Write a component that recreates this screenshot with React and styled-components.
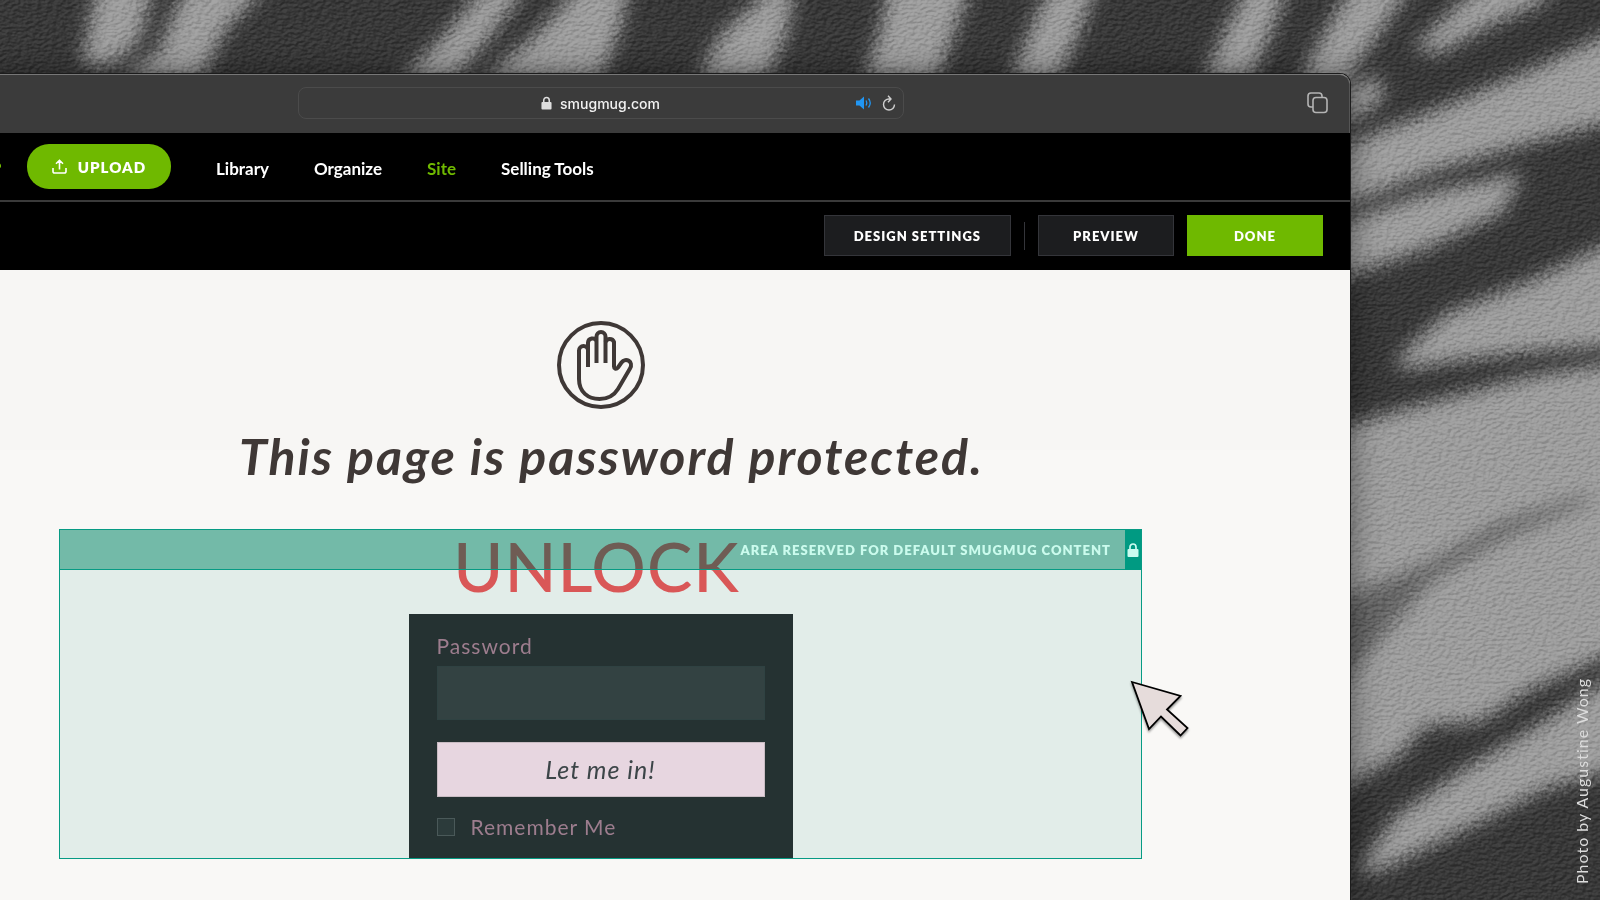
import React, { Component } from "react";
import styled, { createGlobalStyle } from "styled-components";

const GlobalStyle = createGlobalStyle`
  * { box-sizing: border-box; }
  body { margin: 0; background: #383838; font-family: Lato, "Liberation Sans", sans-serif; }
  button, input { font-family: inherit; }
`;

const Desktop = styled.div`
  position: relative;
  display: flex;
  min-height: 100vh;
  overflow: hidden;
`;

const Wallpaper = styled.svg`
  position: absolute;
  top: 0;
  left: 0;
  width: 100%;
  height: 100%;
`;

const Credit = styled.div`
  position: absolute;
  right: 8px;
  bottom: 16px;
  writing-mode: vertical-rl;
  transform: rotate(180deg);
  color: #dcdcdc;
  font-size: 16px;
  line-height: 20px;
  letter-spacing: 1px;
`;

const BrowserWindow = styled.div`
  position: relative;
  flex: 1;
  display: flex;
  flex-direction: column;
  margin: 74px 250px 0 -148px;
  border-radius: 0 10px 0 0;
  background: #f8f7f5;
  box-shadow: 0 0 0 1px #1c1c1c, 2px 0 30px rgba(0, 0, 0, 0.45);
`;

const Chrome = styled.div`
  display: grid;
  grid-template-columns: 1fr 606px 1fr;
  align-items: center;
  height: 59px;
  padding: 0 20px 2px;
  background: #3b3b3b;
  border-top: 1px solid #777;
  border-right: 1px solid #555;
  border-radius: 0 10px 0 0;
`;

const AddressBar = styled.div`
  grid-column: 2;
  display: grid;
  grid-template-columns: 1fr auto 1fr;
  align-items: center;
  height: 32px;
  padding: 0 7px;
  border: 1px solid #4b4b4b;
  border-radius: 8px;
`;

const Address = styled.div`
  grid-column: 2;
  display: flex;
  align-items: center;
  gap: 8px;
  color: #f2f2f2;
  font: 500 14px Inter, "Liberation Sans", sans-serif;
`;

const BarTools = styled.div`
  display: flex;
  justify-content: flex-end;
  align-items: center;
  gap: 10px;
`;

const IconButton = styled.button`
  display: flex;
  justify-self: end;
  padding: 0;
  border: 0;
  background: none;
`;

const SiteNav = styled.nav`
  display: flex;
  align-items: center;
  gap: 45px;
  height: 69px;
  padding: 0 26px 0 100px;
  background: #000;
  border-bottom: 2px solid #3a3a3a;
`;

const Brand = styled.div`
  display: flex;
  align-items: center;
  gap: 26px;
`;

const UploadButton = styled.button`
  display: flex;
  align-items: center;
  justify-content: center;
  gap: 11px;
  width: 144px;
  height: 45px;
  border: 0;
  border-radius: 22px;
  background: #6fb900;
  color: #fff;
  font-size: 15px;
  font-weight: 800;
  letter-spacing: 1px;
`;

const NavLink = styled.a`
  padding-top: 4px;
  color: ${(props) => (props.$active ? "#6fb900" : "#fff")};
  font-size: 17px;
  font-weight: 700;
  line-height: 24px;
  text-decoration: none;
`;

const Toolbar = styled.div`
  display: flex;
  justify-content: flex-end;
  align-items: flex-start;
  gap: 13px;
  height: 68px;
  padding: 13px 27px 0;
  background: #000;
`;

const ToolButton = styled.button`
  min-width: 136px;
  height: 41px;
  padding: 0 29px;
  border: 1px solid ${(props) => (props.$primary ? "#6fb900" : "#34353a")};
  background: ${(props) => (props.$primary ? "#6fb900" : "#1c1d1f")};
  color: #fff;
  font-size: 13px;
  font-weight: 800;
  letter-spacing: 1px;
`;

const Divider = styled.div`
  width: 1px;
  height: 28px;
  margin-top: 7px;
  background: #34353a;
`;

const Content = styled.main`
  flex: 1;
  display: flex;
  flex-direction: column;
  align-items: center;
  padding: 51px 208px 40px 207px;
  background: linear-gradient(#f7f6f4 180px, #f9f8f6 180px);
`;

const PageTitle = styled.h1`
  margin: 18px 0 44px;
  padding-left: 22px;
  color: #3f3836;
  font-size: 50px;
  font-style: italic;
  font-weight: 700;
  line-height: 58px;
  letter-spacing: 2px;
  white-space: nowrap;
`;

const Reserved = styled.section`
  position: relative;
  display: flex;
  flex-direction: column;
  align-items: center;
  align-self: stretch;
  border: 1px solid #079b84;
  background: #e2ede9;
`;

const ReservedBar = styled.div`
  position: absolute;
  top: 0;
  left: 0;
  right: 0;
  display: flex;
  justify-content: flex-end;
  align-items: center;
  gap: 14px;
  height: 40px;
  background: rgba(115, 187, 168, 0.2);
  border-bottom: 1px solid #079b84;
  color: #cbfbed;
  font-size: 13px;
  font-weight: 800;
  letter-spacing: 1px;
`;

const Tint = styled.div`
  position: absolute;
  top: 0;
  left: 0;
  right: 0;
  height: 40px;
  background: #82c9b8;
  mix-blend-mode: multiply;
`;

const LockTab = styled.div`
  display: flex;
  align-items: center;
  justify-content: center;
  width: 16px;
  height: 40px;
  background: #009a82;
`;

const UnlockTitle = styled.h2`
  margin: 0 0 12px;
  padding-right: 8px;
  color: #d95757;
  font-size: 68px;
  font-weight: 500;
  line-height: 72px;
  letter-spacing: 1px;
`;

const Form = styled.form`
  display: flex;
  flex-direction: column;
  width: 384px;
  height: 244px;
  padding: 20px 28px 0;
  background: #253232;
  color: #9d7d8e;
  font-size: 21px;
  line-height: 24px;
`;

const FieldLabel = styled.label`
  letter-spacing: 1px;
`;

const PasswordInput = styled.input`
  height: 54px;
  margin: 8px 0 22px;
  padding: 0 14px;
  border: 1px solid #2f4242;
  border-radius: 0;
  background: #334242;
  color: #e6d5df;
  font-size: 21px;
`;

const SubmitButton = styled.button`
  height: 55px;
  padding: 0 6px 2px;
  border: 1px solid #c9bcc3;
  background: #e7d6e0;
  color: #3c4548;
  font-size: 25px;
  font-style: italic;
  letter-spacing: 1px;
`;

const Remember = styled.div`
  display: flex;
  align-items: center;
  gap: 16px;
  margin-top: 18px;
`;

const Checkbox = styled.input`
  appearance: none;
  width: 18px;
  height: 18px;
  margin: 0;
  border: 1px solid #4a5959;
  background: #2c3b3b;
`;

const Pointer = styled.svg`
  position: absolute;
  right: -50px;
  top: 149px;
`;

const shadowsTop = [
  "98,-20 155,-20 140,40 112,66 82,66 88,30",
  "190,-20 272,-20 225,30 200,80 118,80 160,50 170,20",
  "490,-20 532,-20 495,30 455,80 400,80 440,40",
  "585,-20 630,-20 620,30 600,80 482,80 535,35",
  "780,-20 795,-20 788,30 766,80 698,80 720,35",
  "890,-20 974,-20 955,30 937,80 864,80 880,30",
  "1052,-20 1098,-20 1080,30 1058,80 1010,80 1030,30",
  "1252,-20 1290,-20 1270,35 1250,80 1203,80 1225,30",
  "1355,-20 1415,-20 1380,32 1350,72 1340,90 1296,90 1320,40",
];

const shadowsSide = [
  "1413,48 1463,0 1490,-20 1560,-20 1543,2 1497,22 1437,54",
  "1340,92 1378,75 1384,98 1340,132",
  "1330,150 1430,112 1530,70 1620,28 1620,120 1530,143 1430,172 1330,212",
  "1330,226 1430,192 1523,172 1503,212 1430,247 1330,282",
  "1400,355 1447,313 1530,281 1620,238 1620,345 1530,352 1463,360 1400,370",
  "1330,430 1430,402 1530,376 1620,362 1620,650 1530,690 1480,722 1425,726 1400,755 1330,795",
  "1355,873 1397,815 1463,770 1530,730 1620,672 1620,768 1547,788 1480,822 1380,870",
];

const LockIcon = ({ width, height, color }) => (
  <svg width={width} height={height} viewBox="0 0 12 14" fill="none">
    <path d="M3 7V4a3 3 0 0 1 6 0v3" stroke={color} strokeWidth="1.7" />
    <rect x="0.5" y="6" width="11" height="8" rx="1" fill={color} />
  </svg>
);

const HandIcon = () => (
  <svg width="88" height="88" viewBox="0 0 88 88" fill="none" stroke="#3f3836" strokeWidth="4">
    <circle cx="44" cy="44" r="42" />
    <path d="M31 46V29.500a4.500 4.500 0 0 0-9 0V58c0 13 9 20 20.500 20 8 0 14.500-3.500 18.500-10L73 47.500c4-7-4.500-11.500-8.500-6l-3.500 5c-2 2.500-4 1-4-1V21a4.500 4.500 0 0 0-8.500 0" />
    <path d="M31 35V21.500a4.500 4.500 0 0 1 8.500-1.500V42M39.500 22V15.500a4.500 4.500 0 0 1 9 0V42" />
  </svg>
);

export default class App extends Component {
  render() {
    return (
      <Desktop>
        <GlobalStyle />
        <Wallpaper viewBox="0 0 1600 900" preserveAspectRatio="xMaxYMin slice" aria-hidden="true">
          <defs>
            <filter id="soft" x="-60" y="-60" width="1720" height="1020" filterUnits="userSpaceOnUse" colorInterpolationFilters="sRGB">
              <feGaussianBlur stdDeviation="9" result="blurred" />
              <feTurbulence type="fractalNoise" baseFrequency="0.25" numOctaves="2" result="noise" />
              <feDisplacementMap in="blurred" in2="noise" scale="18" xChannelSelector="R" yChannelSelector="G" />
            </filter>
            <filter id="plaster" x="0" y="0" width="1600" height="900" filterUnits="userSpaceOnUse" colorInterpolationFilters="sRGB">
              <feTurbulence type="fractalNoise" baseFrequency="0.2 0.35" numOctaves="3" seed="4" />
              <feDiffuseLighting surfaceScale="3" lightingColor="#fff" diffuseConstant="0.75">
                <feDistantLight azimuth="235" elevation="42" />
              </feDiffuseLighting>
            </filter>
          </defs>
          <rect width="1600" height="900" fill="#393939" />
          <g filter="url(#soft)">
            <rect x="-60" y="-60" width="1720" height="1020" fill="#393939" />
            <g fill="#9e9e9e">
              {shadowsTop.map((points) => <polygon key={points} points={points} />)}
              {shadowsSide.map((points) => <polygon key={points} points={points} />)}
            </g>
            <polygon
              fill="#393939"
              opacity="0.55"
              points="1330,603 1430,562 1500,522 1590,494 1590,502 1500,540 1430,582 1380,640 1330,695"
            />
          </g>
          <rect width="1600" height="900" filter="url(#plaster)" opacity="0.35" style={{ mixBlendMode: "soft-light" }} />
        </Wallpaper>

        <BrowserWindow>
          <Chrome>
            <AddressBar>
              <Address>
                <LockIcon width="11" height="14" color="#dedede" />
                smugmug.com
              </Address>
              <BarTools>
                <IconButton aria-label="Mute">
                  <svg width="16" height="14" viewBox="0 0 16 14" fill="none" stroke="#2196f3" strokeWidth="1.300">
                    <path d="M0 4.500h3.500L8 .5v13l-4.500-4H0z" fill="#2196f3" stroke="none" />
                    <path d="M10 4.500q1.500 2.500 0 5M12.500 2.500q3.500 4.500 0 9" />
                  </svg>
                </IconButton>
                <IconButton aria-label="Reload">
                  <svg width="14" height="17" viewBox="0 0 14 17" fill="none" stroke="#cfcfcf" strokeWidth="1.400">
                    <path d="M12.500 9.500A5.500 5.500 0 1 1 7 4h1.500M6 .8l3 3.200-3 3.200" />
                  </svg>
                </IconButton>
              </BarTools>
            </AddressBar>
            <IconButton aria-label="Show tabs">
              <svg width="22" height="22" viewBox="0 0 22 22" fill="none" stroke="#b4b4b4" strokeWidth="1.600">
                <path d="M6 15H4a3 3 0 0 1-3-3V4a3 3 0 0 1 3-3h8a3 3 0 0 1 3 3v1.500" />
                <rect x="6" y="5.500" width="14" height="15" rx="3" />
              </svg>
            </IconButton>
          </Chrome>

          <SiteNav>
            <Brand>
              <svg width="49" height="20" viewBox="0 0 49 20" fill="none" stroke="#6fb900" strokeWidth="4">
                <path d="M2 6q22 18 47 2" />
              </svg>
              <UploadButton>
                <svg width="15" height="15" viewBox="0 0 15 15" fill="none" stroke="#fff" strokeWidth="1.600">
                  <path d="M1 9v3.500a1.500 1.500 0 0 0 1.500 1.500h10a1.500 1.500 0 0 0 1.500-1.500V9M7.500 10.500V1.500M4 4.800l3.500-3.500L11 4.800" />
                </svg>
                UPLOAD
              </UploadButton>
            </Brand>
            <NavLink href="#library">Library</NavLink>
            <NavLink href="#organize">Organize</NavLink>
            <NavLink href="#site" $active>Site</NavLink>
            <NavLink href="#selling">Selling Tools</NavLink>
          </SiteNav>

          <Toolbar>
            <ToolButton>DESIGN SETTINGS</ToolButton>
            <Divider />
            <ToolButton>PREVIEW</ToolButton>
            <ToolButton $primary>DONE</ToolButton>
          </Toolbar>

          <Content>
            <HandIcon />
            <PageTitle>This page is password protected.</PageTitle>
            <Reserved>
              <UnlockTitle>UNLOCK</UnlockTitle>
              <Form onSubmit={(e) => e.preventDefault()}>
                <FieldLabel htmlFor="password">Password</FieldLabel>
                <PasswordInput id="password" type="password" />
                <SubmitButton>Let me in!</SubmitButton>
                <Remember>
                  <Checkbox id="remember" type="checkbox" />
                  <FieldLabel htmlFor="remember">Remember Me</FieldLabel>
                </Remember>
              </Form>
              <Tint />
              <ReservedBar>
                AREA RESERVED FOR DEFAULT SMUGMUG CONTENT
                <LockTab>
                  <LockIcon width="12" height="14" color="#cbfbf0" />
                </LockTab>
              </ReservedBar>
              <Pointer width="62" height="62" viewBox="0 0 62 62">
                <path
                  d="M3 3L51.500 17 38 30.500 58.500 49l-7 7.500L32 37.500 20 50z"
                  fill="#e6dcdb"
                  stroke="#000"
                  strokeWidth="1.800"
                  style={{ filter: "drop-shadow(0 2px 1px rgba(0,0,0,.4))" }}
                />
              </Pointer>
            </Reserved>
          </Content>
        </BrowserWindow>
        <Credit>Photo by Augustine Wong</Credit>
      </Desktop>
    );
  }
}
